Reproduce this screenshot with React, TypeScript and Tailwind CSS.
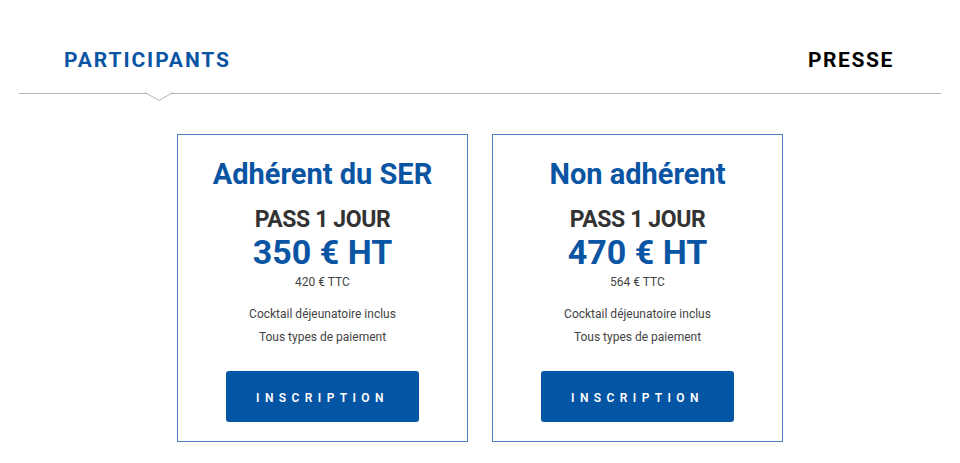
import React from "react";

type Offer = {
  title: string;
  price: string;
  ttc: string;
};

const offers: Offer[] = [
  {title: "Adhérent du SER", price: "350 € HT", ttc: "420 € TTC"},
  {title: "Non adhérent", price: "470 € HT", ttc: "564 € TTC"},
];

export default function App(): React.JSX.Element {
  return (
    <div className="min-h-[463px] w-[960px] bg-white font-['Roboto',sans-serif]">
      <Tabs/>
      <div className="flex justify-center gap-[24px] pt-[40px]">
        {offers.map((o) => (
          <PriceCard key={o.title} offer={o}/>
        ))}
      </div>
    </div>
  );
}

function Tabs(): React.JSX.Element {
  return (
    <div className="px-[19px] pt-[48px]">
      <div className="relative flex items-center justify-between border-b border-[#b4b4b4] pb-[21px] pl-[45px] pr-[47px]">
        <span className="text-[21px] font-bold leading-[24px] tracking-[1.9px] text-[#0a55a3]">PARTICIPANTS</span>
        <span className="text-[21px] font-bold leading-[24px] tracking-[1.6px] text-black">PRESSE</span>
        {/* petite flèche sous l'onglet actif */}
        <svg className="absolute bottom-[-9px] left-[126px]" width="28" height="10" viewBox="0 0 28 10" aria-hidden>
          <path d="M0 0.5 L14 8.5 L28 0.5" fill="white" stroke="#b4b4b4" strokeWidth="1"/>
        </svg>
      </div>
    </div>
  );
}

function PriceCard({offer}: { offer: Offer }): React.JSX.Element {
  return (
    <div className="flex w-[291px] flex-col items-center border border-[#4f82c0] pb-[19px] pt-[22px] text-center">
      <h2 className="text-[29px] font-bold leading-[34px] text-[#0a55a3]">{offer.title}</h2>
      <div className="mt-[17px] text-[23px] font-bold leading-[24px] tracking-[-0.4px] text-[#333333]">PASS 1 JOUR</div>
      <div className="mt-[1px] text-[34px] font-bold leading-[38px] text-[#0a55a3]">{offer.price}</div>
      <div className="mt-[4px] text-[12px] leading-[14px] text-[#444444]">{offer.ttc}</div>
      <div className="mt-[17px] text-[12px] leading-[16px] text-[#444444]">Cocktail déjeunatoire inclus</div>
      <div className="mt-[7px] text-[12px] leading-[16px] text-[#444444]">Tous types de paiement</div>
      <button
        type="button"
        className="mt-[26px] h-[51px] w-[193px] rounded-[3px] bg-[#0455a4] pt-[2px] text-[12px] font-semibold tracking-[5.4px] text-white"
      >
        INSCRIPTION
      </button>
    </div>
  );
}
